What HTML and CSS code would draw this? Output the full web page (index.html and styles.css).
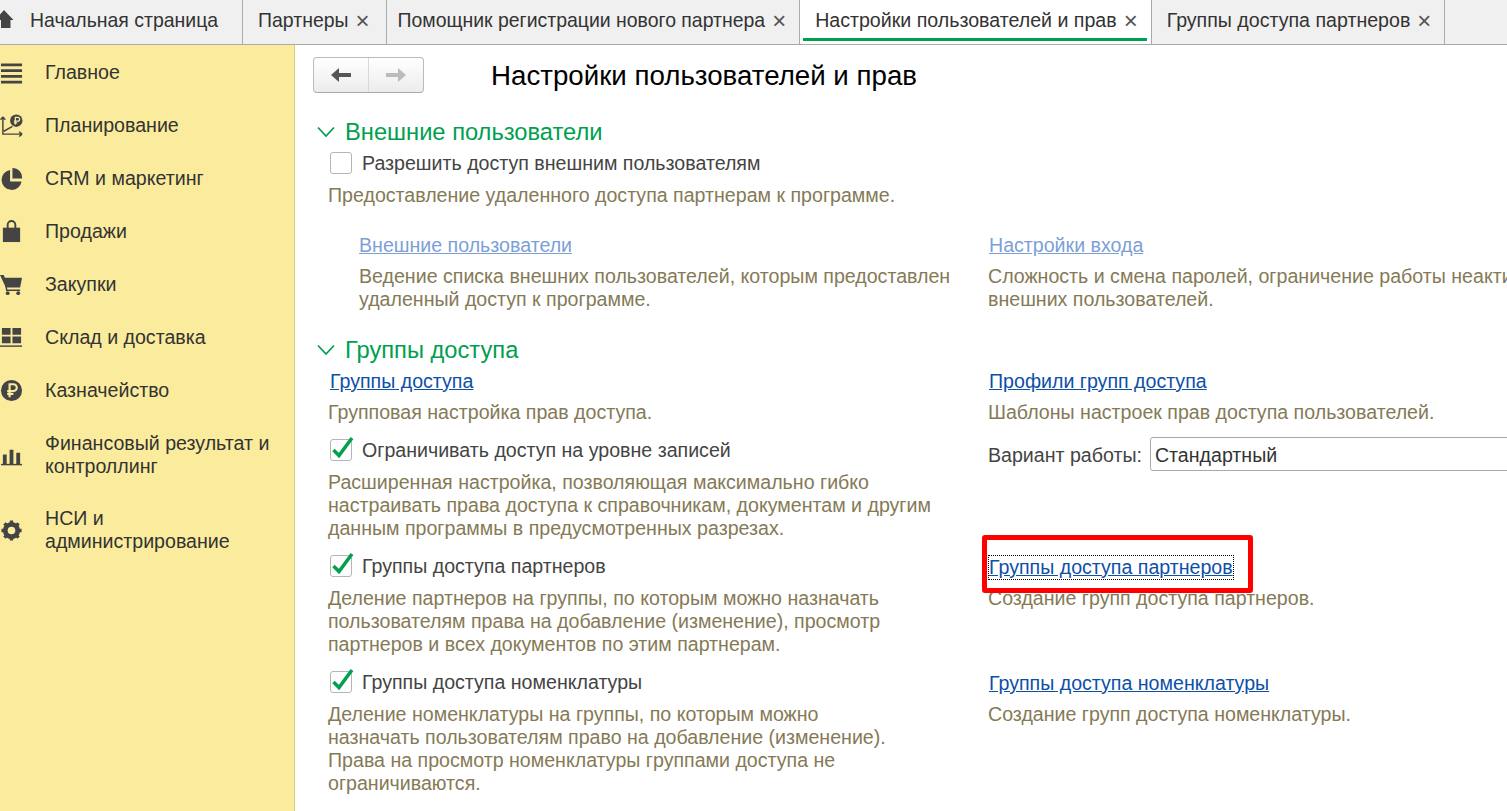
FILE: index.html
```html
<!DOCTYPE html>
<html lang="ru">
<head>
    <meta charset="UTF-8">
    <title>Настройки пользователей и прав</title>
    <link rel="stylesheet" href="styles.css">
</head>
<body>
    <div class="tabs">
        <div class="tab tab-home">
            <svg class="home-icon" viewBox="0 0 14 18"><path d="M4 0L13.500 10H10.500V18H1V10H-5Z" fill="#444"/></svg>
            Начальная страница
        </div>
        <div class="tab">Партнеры <span class="close">×</span></div>
        <div class="tab tab-narrow">Помощник регистрации нового партнера <span class="close">×</span></div>
        <div class="tab tab-active">Настройки пользователей и прав <span class="close">×</span></div>
        <div class="tab tab-last">Группы доступа партнеров <span class="close">×</span></div>
    </div>

    <div class="layout">
        <div class="sidebar">
            <div class="menu-item">
                <svg class="menu-icon" viewBox="0 0 24 24"><path d="M1 2.500h22v3H1zM1 8.500h22v3H1zM1 14.500h22v3H1zM1 20.500h22v3H1z" fill="#444"/></svg>
                <span>Главное</span>
            </div>
            <div class="menu-item">
                <svg class="menu-icon" viewBox="0 0 24 24"><path d="M3 3V21H23M3 3L0.500 6M3 3L5.500 6M23 21L20 18.500M23 21L20 23.500M4 18L13 13" fill="none" stroke="#444" stroke-width="1.500"/><circle cx="17" cy="7" r="6.500" fill="#444"/><path d="M16 11V3.500H18.500A2 2 0 0 1 18.500 7.500H14.500M14.500 9.300H18" fill="none" stroke="#fbec9d" stroke-width="1.300"/></svg>
                <span>Планирование</span>
            </div>
            <div class="menu-item">
                <svg class="menu-icon" viewBox="0 0 24 24"><path d="M10.500 3A10.500 10.500 0 1 0 22.500 15H10.500Z" fill="#444"/><path d="M13 1A10 10 0 0 1 23 12H13Z" fill="#444"/></svg>
                <span>CRM и маркетинг</span>
            </div>
            <div class="menu-item">
                <svg class="menu-icon" viewBox="0 0 24 24"><path d="M3 8H21V23H3Z" fill="#444"/><path d="M8 11V5A4 4 0 0 1 16 5V11" fill="none" stroke="#444" stroke-width="2"/></svg>
                <span>Продажи</span>
            </div>
            <div class="menu-item">
                <svg class="menu-icon" viewBox="0 0 24 24"><path d="M0 2H4L5 5H23L21 15H6Z" fill="#444"/><path d="M5 5L7 18H21" fill="none" stroke="#444" stroke-width="1.500"/><circle cx="8" cy="21" r="2" fill="#444"/><circle cx="19" cy="21" r="2" fill="#444"/></svg>
                <span>Закупки</span>
            </div>
            <div class="menu-item">
                <svg class="menu-icon" viewBox="0 0 24 24"><path d="M2 2H11V9H2ZM13 2H22V9H13ZM2 11H11V18H2ZM13 11H22V18H13Z" fill="#444"/><path d="M0 21H23" stroke="#444" stroke-width="1.500"/></svg>
                <span>Склад и доставка</span>
            </div>
            <div class="menu-item">
                <svg class="menu-icon" viewBox="0 0 24 24"><circle cx="12" cy="12" r="11" fill="#444"/><path d="M10 19V5.500H14A3.500 3.500 0 0 1 14 12.500H7.500M7.500 15.500H14" fill="none" stroke="#fbec9d" stroke-width="2.200"/></svg>
                <span>Казначейство</span>
            </div>
            <div class="menu-item">
                <svg class="menu-icon" viewBox="0 0 24 24"><path d="M3 11H7V21H3ZM10 6H14V21H10ZM17 9H21V21H17Z" fill="#444"/><path d="M1 21.500H23" stroke="#444" stroke-width="1.500"/></svg>
                <span>Финансовый результат и контроллинг</span>
            </div>
            <div class="menu-item menu-item-last">
                <svg class="menu-icon" viewBox="0 0 24 24"><circle cx="12" cy="12" r="6.500" fill="none" stroke="#444" stroke-width="5"/><path d="M12 1.500V22.500M1.500 12H22.500M4.600 4.600L19.400 19.400M19.400 4.600L4.600 19.400" stroke="#444" stroke-width="3.500" stroke-dasharray="5 11"/></svg>
                <span>НСИ и администрирование</span>
            </div>
        </div>

        <div class="content">
            <div class="page-head">
                <div class="nav-btns">
                    <div class="nav-btn">
                        <svg width="22" height="16" viewBox="0 0 22 16"><path d="M1 8L9 1V6H21V10H9V15Z" fill="#555"/></svg>
                    </div>
                    <div class="nav-btn">
                        <svg width="22" height="16" viewBox="0 0 22 16"><path d="M21 8L13 1V6H1V10H13V15Z" fill="#bbb"/></svg>
                    </div>
                </div>
                <h1>Настройки пользователей и прав</h1>
            </div>

            <div class="section-head">
                <svg class="chevron" viewBox="0 0 18 12"><path d="M1 1.500L9 10L17 1.500" fill="none" stroke="#00a04f" stroke-width="1.800"/></svg>
                Внешние пользователи
            </div>
            <div class="check-row check-first">
                <span class="checkbox"></span>
                Разрешить доступ внешним пользователям
            </div>
            <p class="desc desc-main">Предоставление удаленного доступа партнерам к программе.</p>

            <div class="row row-links">
                <div class="col-indent">
                    <a class="link link-off">Внешние пользователи</a>
                    <p class="desc">Ведение списка внешних пользователей, которым предоставлен удаленный доступ к программе.</p>
                </div>
                <div>
                    <a class="link link-off">Настройки входа</a>
                    <p class="desc desc-nowrap">Сложность и смена паролей, ограничение работы неактивных<br>внешних пользователей.</p>
                </div>
            </div>

            <div class="section-head section-second">
                <svg class="chevron" viewBox="0 0 18 12"><path d="M1 1.500L9 10L17 1.500" fill="none" stroke="#00a04f" stroke-width="1.800"/></svg>
                Группы доступа
            </div>
            <div class="row row-first">
                <div>
                    <a class="link">Группы доступа</a>
                    <p class="desc">Групповая настройка прав доступа.</p>
                </div>
                <div>
                    <a class="link">Профили групп доступа</a>
                    <p class="desc">Шаблоны настроек прав доступа пользователей.</p>
                </div>
            </div>
            <div class="row row-variant">
                <div class="col-check">
                    <div class="check-row">
                        <span class="checkbox"><svg viewBox="0 0 22 22"><path d="M3.500 11L9 16.500L22 -1" fill="none" stroke="#00a04f" stroke-width="3.500"/></svg></span>
                        Ограничивать доступ на уровне записей
                    </div>
                    <p class="desc desc-wide">Расширенная настройка, позволяющая максимально гибко настраивать права доступа к справочникам, документам и другим данным программы в предусмотренных разрезах.</p>
                </div>
                <div class="variant">
                    <span class="variant-label">Вариант работы:</span>
                    <div class="select">Стандартный</div>
                </div>
            </div>
            <div class="row row-check">
                <div>
                    <div class="check-row">
                        <span class="checkbox"><svg viewBox="0 0 22 22"><path d="M3.500 11L9 16.500L22 -1" fill="none" stroke="#00a04f" stroke-width="3.500"/></svg></span>
                        Группы доступа партнеров
                    </div>
                    <p class="desc desc-narrow">Деление партнеров на группы, по которым можно назначать пользователям права на добавление (изменение), просмотр партнеров и всех документов по этим партнерам.</p>
                </div>
                <div class="col-link">
                    <a class="link link-focus">Группы доступа партнеров</a>
                    <span class="red-box"></span>
                    <p class="desc">Создание групп доступа партнеров.</p>
                </div>
            </div>
            <div class="row row-check">
                <div>
                    <div class="check-row">
                        <span class="checkbox"><svg viewBox="0 0 22 22"><path d="M3.500 11L9 16.500L22 -1" fill="none" stroke="#00a04f" stroke-width="3.500"/></svg></span>
                        Группы доступа номенклатуры
                    </div>
                    <p class="desc desc-narrow">Деление номенклатуры на группы, по которым можно назначать пользователям право на добавление (изменение). Права на просмотр номенклатуры группами доступа не ограничиваются.</p>
                </div>
                <div class="col-link">
                    <a class="link">Группы доступа номенклатуры</a>
                    <p class="desc">Создание групп доступа номенклатуры.</p>
                </div>
            </div>
        </div>
    </div>
</body>
</html>
```

FILE: styles.css
```css
html, body {
    height: 100%;
}

body {
    margin: 0;
    overflow: hidden;
    background-color: #fff;
    color: #333;
    font-family: "Liberation Sans", Arial, sans-serif;
    font-size: 19.6px;
    line-height: 23px;
}

/* Tabs */
.tabs {
    display: flex;
    height: 44px;
    background-color: #f0f0f0;
    border-bottom: 1px solid #aaa;
    font-size: 19.45px;
}

.tab {
    display: flex;
    align-items: center;
    padding: 0 16px 3px 15px;
    border-right: 1px solid #aaa;
    white-space: nowrap;
}

.tab-home {
    padding-left: 0;
    padding-right: 24px;
}

.tab-narrow {
    padding-left: 11px;
    padding-right: 13px;
}

.home-icon {
    flex: none;
    width: 14px;
    height: 18px;
    margin-right: 16px;
    margin-top: -4px;
    overflow: hidden;
}

.tab-active {
    position: relative;
    padding-right: 13px;
    background-color: #fff;
    font-size: 19.6px;
}

.tab-last {
    padding-right: 13px;
    font-size: 19.6px;
}

.tab-active::after {
    content: "";
    position: absolute;
    left: 3px;
    right: 4px;
    bottom: 3px;
    height: 3px;
    background-color: #00a04f;
}

.close {
    margin-left: 7px;
    color: #555;
    font-size: 24px;
}

/* Sidebar */
.layout {
    display: flex;
    height: calc(100% - 45px);
}

.sidebar {
    flex: none;
    width: 294px;
    padding-top: 1px;
    background-color: #fbec9d;
    border-right: 1px solid #d9cc85;
}

.menu-item {
    display: flex;
    align-items: center;
    padding: 15px 20px 15px 0;
}

.menu-item-last {
    margin-top: -1px;
}

.menu-icon {
    flex: none;
    width: 23px;
    height: 23px;
    margin-right: 22px;
}

/* Content */
.content {
    flex: 1;
    min-width: 0;
    overflow: hidden;
}

.page-head {
    display: flex;
    align-items: flex-start;
    margin: 12px 0 0 18px;
}

.nav-btns {
    display: flex;
    width: 111px;
    height: 36px;
    box-sizing: border-box;
    border: 1px solid #bbb;
    border-bottom-color: #aaa;
    border-radius: 4px;
    background: linear-gradient(#fff, #ececec);
}

.nav-btn {
    flex: 1;
    display: flex;
    align-items: center;
    justify-content: center;
}

.nav-btn + .nav-btn {
    border-left: 1px solid #d8d8d8;
}

h1 {
    margin: 1px 0 0 67px;
    color: #000;
    font-size: 27.7px;
    font-weight: normal;
    line-height: 36px;
}

.section-head {
    display: flex;
    align-items: center;
    height: 24px;
    margin: 26px 0 0 22px;
    color: #00a04f;
    font-size: 23.7px;
}

.section-second {
    margin-top: 27px;
}

.chevron {
    width: 18px;
    height: 12px;
    margin-right: 10px;
}

.check-row {
    display: flex;
    align-items: center;
    height: 22px;
    color: #444;
}

.check-first {
    margin: 8px 0 0 35px;
}

.checkbox {
    flex: none;
    width: 22px;
    height: 22px;
    box-sizing: border-box;
    margin-right: 10px;
    border: 1px solid #b5b5b5;
    border-radius: 3px;
    background-color: #fff;
}

.checkbox svg {
    display: block;
    width: 22px;
    height: 22px;
    margin: -1px;
    overflow: visible;
}

.desc {
    margin: 8px 0 0;
    color: #857a56;
}

.desc-main {
    margin: 10px 0 0 33px;
}

.row {
    display: grid;
    grid-template-columns: 660px 1fr;
    margin-left: 33px;
}

.row-links {
    margin-top: 27px;
}

.row-first {
    margin-top: 8px;
}

.row-variant {
    margin-top: 13px;
}

.row-check {
    margin-top: 15px;
}

.row > div {
    min-width: 0;
}

.row .check-row {
    margin-left: 2px;
}

.row .check-row + .desc {
    margin-top: 10px;
}

.col-indent {
    padding-left: 31px;
}

.col-indent .link {
    margin-left: 0;
}

.col-check {
    padding-top: 2px;
}

.col-link {
    position: relative;
    padding-top: 1px;
}

.desc-wide {
    width: 620px;
}

.desc-narrow {
    width: 570px;
}

.desc-nowrap {
    white-space: nowrap;
}

.link {
    display: inline-block;
    margin-left: 2px;
    color: #0e4fa8;
    text-decoration: underline;
}

.row > div:last-child > .link {
    margin-left: 1px;
}

.link-off {
    color: #7d9fd8;
}

.link-focus {
    outline: 1px dotted #000;
    outline-offset: 0;
}

.red-box {
    position: absolute;
    left: -6px;
    top: -20px;
    width: 271px;
    height: 58px;
    box-sizing: border-box;
    border: 5px solid #f00;
    border-radius: 3px;
}

.variant {
    display: flex;
    align-items: center;
    height: 34px;
}

.variant-label {
    flex: none;
    margin-right: 8px;
    padding-top: 2px;
    color: #444;
}

.select {
    flex: none;
    width: 500px;
    height: 34px;
    box-sizing: border-box;
    padding: 6px 4px 4px;
    border: 1px solid #aaa;
    border-radius: 3px;
    color: #333;
}
```
